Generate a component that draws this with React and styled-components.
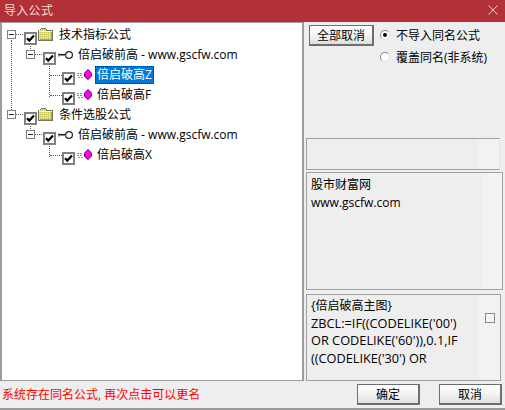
import React from "react";
import styled, { createGlobalStyle } from "styled-components";

const Global = createGlobalStyle`
  html, body {
    margin: 0;
    padding: 0;
    background: #eeeeee;
  }
`;

const uiFont = `"Open Sans", "Noto Sans CJK SC", sans-serif`;

const Window = styled.div`
  width: 505px;
  height: 410px;
  display: flex;
  flex-direction: column;
  overflow: hidden;
  background: #eeeeee;
  font-family: ${uiFont};
  font-size: 12px;
  color: #000;
  border-bottom: 2px solid #9a9a9a;
  box-sizing: border-box;
`;

const TitleBar = styled.div`
  height: 22px;
  flex: none;
  display: flex;
  align-items: center;
  justify-content: space-between;
  padding: 0 7px 2px 4px;
  box-sizing: border-box;
  background: #b13136;
  color: #f3dcdc;
  font-size: 12px;
  letter-spacing: 0.3px;
`;

const Body = styled.div`
  height: 359px;
  flex: none;
  display: flex;
`;

const TreePane = styled.div`
  width: 304px;
  flex: none;
  box-sizing: border-box;
  background: #fff;
  border: 1px solid #9c9c9c;
  border-left-width: 2px;
  border-right-width: 2px;
  padding-top: 4px;
`;

const Roots = styled.div`
  position: relative;
  &::before {
    content: "";
    position: absolute;
    left: 9px;
    top: 13px;
    height: 70px;
    border-left: 1px dotted #555;
  }
`;

const Branch = styled.div`
  position: relative;
  &::before {
    content: "";
    position: absolute;
    left: 28px;
    top: -3px;
    height: 7px;
    border-left: 1px dotted #555;
  }
`;

const Leaves = styled.div`
  position: relative;
  &::before {
    content: "";
    position: absolute;
    left: 47px;
    top: -3px;
    bottom: 10px;
    border-left: 1px dotted #555;
  }
`;

const Row = styled.div`
  position: relative;
  height: 20px;
  display: flex;
  align-items: center;
  padding-left: ${(p) => p.$indent}px;
`;

const Expander = styled.span`
  position: absolute;
  left: ${(p) => p.$left}px;
  top: 3px;
  width: 9px;
  height: 9px;
  box-sizing: border-box;
  border: 1px solid #808080;
  background: #fff;
  z-index: 1;
  &::before {
    content: "";
    position: absolute;
    left: 1px;
    top: 3px;
    width: 5px;
    height: 1px;
    background: #222;
  }
  &::after {
    content: "";
    position: absolute;
    left: 8px;
    top: 3px;
    width: 7px;
    border-top: 1px dotted #555;
  }
`;

const LeafTick = styled.span`
  position: absolute;
  left: 48px;
  top: 8px;
  width: 12px;
  border-top: 1px dotted #555;
`;

const CheckBox = styled.span`
  flex: none;
  width: 13px;
  height: 13px;
  margin-top: 3px;
  box-sizing: border-box;
  border: 2px solid #808080;
  background: #fff;
  display: flex;
  align-items: center;
  justify-content: center;
  position: relative;
  z-index: 1;
`;

const Label = styled.span`
  margin-left: ${(p) => p.$gap}px;
  margin-top: -5px;
  height: 18px;
  line-height: 18px;
  white-space: nowrap;
  color: #000;
  padding: 0 2px;
  ${(p) =>
    p.$selected &&
    `
    background: #0078d7;
    color: #fff;
    outline: 1px dotted #3a2a10;
    outline-offset: -1px;
  `}
`;

const IconSlot = styled.svg`
  flex: none;
  margin-top: ${(p) => p.$top}px;
  margin-left: ${(p) => p.$left}px;
  shape-rendering: ${(p) => (p.$smooth ? "auto" : "crispEdges")};
`;

const Side = styled.div`
  flex: 1;
  min-width: 0;
  display: flex;
  flex-direction: column;
  padding-left: 2px;
`;

const Controls = styled.div`
  height: 116px;
  flex: none;
  display: flex;
  gap: 6px;
  padding: 3px 0 0 3px;
  box-sizing: border-box;
`;

const RaisedButton = styled.button`
  width: ${(p) => p.$width}px;
  height: ${(p) => p.$height}px;
  flex: none;
  padding: 0;
  box-sizing: border-box;
  border: 1px solid #6e6e6e;
  border-right-width: 2px;
  border-bottom-width: 2px;
  background: linear-gradient(#ffffff, #f4f4f4 50%, #dedede);
  font-family: ${uiFont};
  font-size: 12px;
  color: #000;
`;

const RadioGroup = styled.div`
  display: flex;
  flex-direction: column;
  gap: 2px;
`;

const RadioRow = styled.label`
  height: 20px;
  display: flex;
  align-items: center;
  gap: 6px;
  white-space: nowrap;
`;

const RadioDot = styled.span`
  width: 10px;
  height: 10px;
  box-sizing: border-box;
  flex: none;
  border-radius: 50%;
  background: #fff;
  border: 1px solid #8a8a8a;
  border-right-color: #ddd;
  border-bottom-color: #ddd;
  display: flex;
  align-items: center;
  justify-content: center;
  &::after {
    content: "";
    width: 4px;
    height: 4px;
    border-radius: 50%;
    background: ${(p) => (p.$on ? "#000" : "transparent")};
  }
`;

const Box = styled.div`
  flex: none;
  position: relative;
  box-sizing: border-box;
  height: ${(p) => p.$height}px;
  width: ${(p) => p.$width}px;
  margin-bottom: ${(p) => p.$after || 0}px;
  border: 1px solid #a0a0a0;
  border-right-color: ${(p) => (p.$flat ? "#e4e4e4" : "#a0a0a0")};
  background: linear-gradient(to right, #eeeeee 89%, #f3f2f0 89%);
  padding: ${(p) => p.$top || 3}px 4px;
  font-size: 12px;
  line-height: 17.5px;
  overflow: hidden;
  white-space: pre-line;
`;

const CodeText = styled.span`
  font-size: 12.75px;
`;

const BoxCheck = styled.span`
  position: absolute;
  right: 5px;
  top: 18px;
  width: 10px;
  height: 10px;
  box-sizing: border-box;
  border: 1px solid #8c8c8c;
  background: #f4f4f4;
`;

const Footer = styled.div`
  flex: 1;
  display: flex;
  align-items: center;
  justify-content: space-between;
  padding: 0 3px 1px 2px;
`;

const Status = styled.span`
  color: #ff0000;
  font-size: 12px;
  white-space: nowrap;
`;

const FooterButtons = styled.div`
  display: flex;
  gap: 19px;
`;

const CloseIcon = () => (
  <svg width="10" height="10" viewBox="0 0 10 10">
    <path d="M0.5 0.5L9.5 9.5M9.5 0.5L0.5 9.5" stroke="#f0d0d0" strokeWidth="1" fill="none" />
  </svg>
);

const Tick = () => (
  <svg width="9" height="9" viewBox="0 0 9 9">
    <path d="M1 4.200L3.300 6.600L8 1.600" stroke="#000" strokeWidth="2.200" fill="none" />
  </svg>
);

const FolderIcon = () => (
  <IconSlot width="15" height="13" viewBox="0 0 15 13" $top={-6} $left={1}>
    <defs>
      <pattern id="dither" width="2" height="2" patternUnits="userSpaceOnUse">
        <rect width="2" height="2" fill="#fff000" />
        <rect width="1" height="1" fill="#c9c45e" />
      </pattern>
    </defs>
    <path d="M1 2V12H14V3H8V1H3V2Z" fill="url(#dither)" />
    <path d="M3 .5H8M8.500 1V3M2 1.500H3M.5 2V12.500H14M9 2.500H14.500V13" stroke="#77755a" fill="none" />
    <path d="M1 3.500H13.500" stroke="#fffde0" fill="none" />
    <path d="M13.500 4V11.500H2" stroke="#b8a93a" fill="none" />
  </IconSlot>
);

const KeyIcon = () => (
  <IconSlot width="15" height="8" viewBox="0 0 15 8" $top={-5} $left={2} $smooth>
    <circle cx="11" cy="4" r="3.400" fill="#fff" stroke="#222" strokeWidth="1.200" />
    <path d="M7.500 3.500H0.500" stroke="#222" fill="none" />
    <path d="M7.500 4.500H2" stroke="#888" fill="none" />
    <path d="M1 2.500V5.500" stroke="#222" fill="none" />
  </IconSlot>
);

const GemIcon = () => (
  <IconSlot width="15" height="11" viewBox="0 0 15 11" $top={-5} $left={2} $smooth>
    <path d="M0 4.500H6M0 6.500H6M1 8.500H6" stroke="#8a8a8a" strokeDasharray="2 1" />
    <path d="M11 0L15 4V7L11 11L7 7V4Z" fill="#ff00f0" />
    <path d="M7.500 4.500V7L11 10.500" stroke="#3a0f50" fill="none" />
    <path d="M7.500 4.500L11 .5L14.500 4.500V7L11 10.500" stroke="#8a1a90" fill="none" />
  </IconSlot>
);

const Leaf = ({ name, selected }) => (
  <Row $indent={60}>
    <LeafTick />
    <CheckBox>
      <Tick />
    </CheckBox>
    <GemIcon />
    <Label $gap={3} $selected={selected}>
      {name}
    </Label>
  </Row>
);

const Formula = ({ title, leaves }) => (
  <>
    <Row $indent={22}>
      <Expander $left={5} />
      <CheckBox>
        <Tick />
      </CheckBox>
      <FolderIcon />
      <Label $gap={4}>{title}</Label>
    </Row>
    <Branch>
      <Row $indent={41}>
        <Expander $left={24} />
        <CheckBox>
          <Tick />
        </CheckBox>
        <KeyIcon />
        <Label $gap={3}>倍启破前高 - www.gscfw.com</Label>
      </Row>
      <Leaves>
        {leaves.map((l) => (
          <Leaf key={l.name} name={l.name} selected={l.selected} />
        ))}
      </Leaves>
    </Branch>
  </>
);

export default function App() {
  return (
    <Window>
      <Global />
      <TitleBar>
        <span>导入公式</span>
        <CloseIcon />
      </TitleBar>
      <Body>
        <TreePane>
          <Roots>
            <Formula
              title="技术指标公式"
              leaves={[{ name: "倍启破高Z", selected: true }, { name: "倍启破高F" }]}
            />
            <Formula title="条件选股公式" leaves={[{ name: "倍启破高X" }]} />
          </Roots>
        </TreePane>
        <Side>
          <Controls>
            <RaisedButton $width={65} $height={21}>全部取消</RaisedButton>
            <RadioGroup>
              <RadioRow>
                <RadioDot $on />
                不导入同名公式
              </RadioRow>
              <RadioRow>
                <RadioDot />
                覆盖同名(非系统)
              </RadioRow>
            </RadioGroup>
          </Controls>
          <Box $height={32} $width={194} $after={2} $flat />
          <Box $height={118} $width={197} $after={4}>
            {"股市财富网\nwww.gscfw.com"}
          </Box>
          <Box $height={87} $width={195} $top={2}>
            {"{倍启破高主图}\n"}
            <CodeText>{"ZBCL:=IF((CODELIKE('00')\nOR CODELIKE('60')),0.1,IF\n((CODELIKE('30') OR"}</CodeText>
            <BoxCheck />
          </Box>
        </Side>
      </Body>
      <Footer>
        <Status>系统存在同名公式, 再次点击可以更名</Status>
        <FooterButtons>
          <RaisedButton $width={63} $height={21}>确定</RaisedButton>
          <RaisedButton $width={63} $height={21}>取消</RaisedButton>
        </FooterButtons>
      </Footer>
    </Window>
  );
}
